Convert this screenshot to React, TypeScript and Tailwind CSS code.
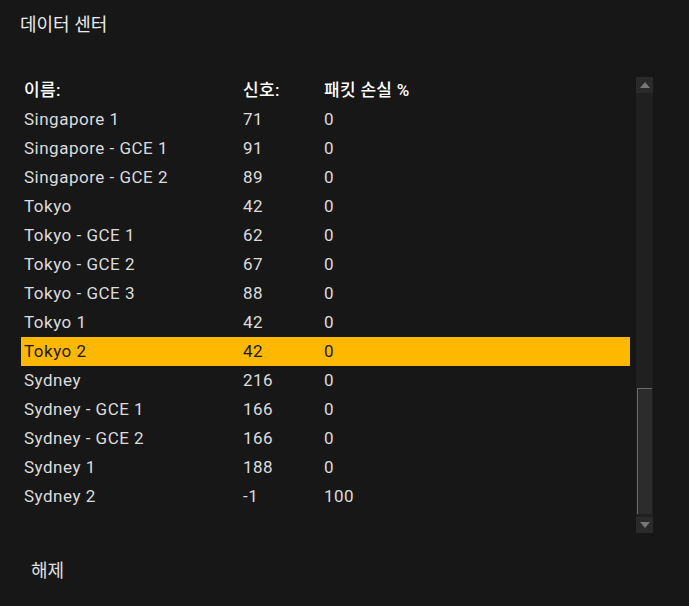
import React from "react";

const rows: [string, string, string][] = [
  ["Singapore 1", "71", "0"],
  ["Singapore - GCE 1", "91", "0"],
  ["Singapore - GCE 2", "89", "0"],
  ["Tokyo", "42", "0"],
  ["Tokyo - GCE 1", "62", "0"],
  ["Tokyo - GCE 2", "67", "0"],
  ["Tokyo - GCE 3", "88", "0"],
  ["Tokyo 1", "42", "0"],
  ["Tokyo 2", "42", "0"],
  ["Sydney", "216", "0"],
  ["Sydney - GCE 1", "166", "0"],
  ["Sydney - GCE 2", "166", "0"],
  ["Sydney 1", "188", "0"],
  ["Sydney 2", "-1", "100"],
];

export default function App() {
  return (
    <div
      className="w-[689px] h-[606px] bg-[#171717] text-[#e6e6e6] flex flex-col"
      style={{ fontFamily: "Roboto, 'Noto Sans CJK KR', sans-serif" }}
    >
      <div className="pl-[20px] pt-[13px] h-[40px] text-[18px] leading-[24px] text-[#ececec]">데이터 센터</div>
      <div className="flex mt-[37px] h-[456px]">
        <div className="ml-[21px] w-[609px] flex flex-col">
          <div className="h-[28px] flex items-center text-[17px] tracking-[0.3px] font-medium text-white">
            <div className="w-[222px] pl-[3px]">이름:</div>
            <div className="w-[81px]">신호:</div>
            <div>패킷 손실 %</div>
          </div>
          {rows.map((r, i) => {
            const sel = i === 8;
            return (
              <div
                key={i}
                className={
                  "h-[29px] flex items-center text-[17px] tracking-[0.5px] " +
                  (sel ? "bg-[#ffb800] text-[#1a1a1a]" : "text-[#dcdcdc]")
                }
              >
                <div className="w-[222px] pl-[3px]">{r[0]}</div>
                <div className="w-[81px]">{r[1]}</div>
                <div>{r[2]}</div>
              </div>
            );
          })}
        </div>
        <div className="ml-[6px] w-[17px] h-[456px] bg-[#202020] flex flex-col">
          <div className="h-[16px] bg-[#2a2a2a] flex items-center justify-center">
            <svg width="10" height="6" viewBox="0 0 10 6"><polygon points="5,0 10,6 0,6" fill="#777" /></svg>
          </div>
          <div className="flex-1 flex flex-col justify-end">
            <div className="mx-[1px] h-[126px] bg-[#2c2c2c] border-l border-t border-[#6a6a6a]" />
          </div>
          <div className="h-[3px]" />
          <div className="h-[16px] bg-[#2a2a2a] flex items-center justify-center">
            <svg width="10" height="6" viewBox="0 0 10 6"><polygon points="0,0 10,0 5,6" fill="#777" /></svg>
          </div>
        </div>
      </div>
      <div className="pl-[31px] mt-[26px] text-[18px] leading-[24px] text-[#e0e0e0]">해제</div>
    </div>
  );
}
